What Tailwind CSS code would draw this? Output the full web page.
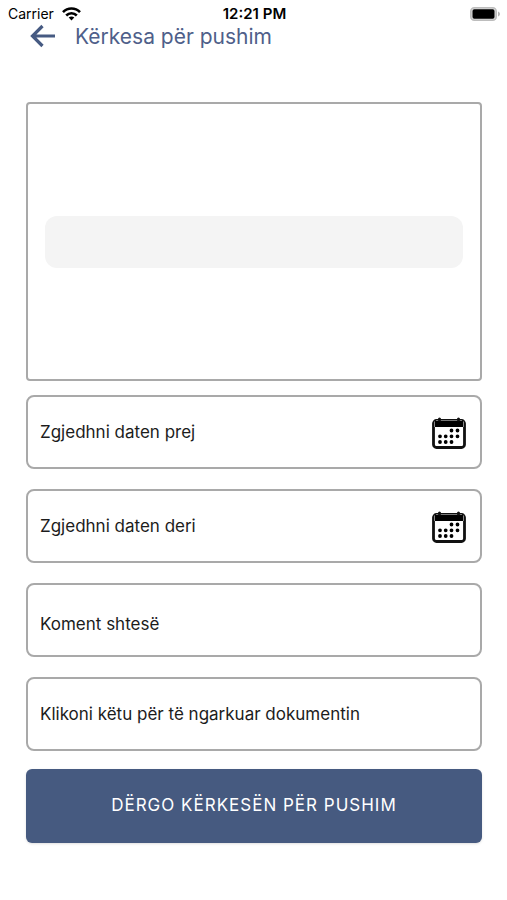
<!DOCTYPE html>
<html lang="sq">
<head>
<meta charset="utf-8">
<meta name="viewport" content="width=device-width, initial-scale=1">
<title>Kërkesa për pushim</title>
<script src="https://cdn.jsdelivr.net/npm/@tailwindcss/browser@4"></script>
</head>
<body class="min-h-screen bg-white font-['Inter','Liberation_Sans',sans-serif] text-[17px] text-[#1c1c1c]">
<div class="grid h-6 grid-cols-3 items-center pt-1 pl-2 pr-1.5 text-[14px] leading-5 text-black">
  <div class="flex items-center gap-2">
    <span>Carrier</span>
    <svg class="h-3.5 w-[19px]" viewBox="0 0 19 14" fill="none" stroke="#000" stroke-width="2.6" aria-hidden="true">
      <path d="M1 5.2C5.7.3 13.3.3 18 5.2"/>
      <path d="M4.2 8.5c3-3.1 7.600-3.100 10.600 0"/>
      <path d="M9.500 13.500 6.700 10.600c1.600-1.500 4-1.500 5.600 0z" fill="#000" stroke="none"/>
    </svg>
  </div>
  <div class="text-center text-[15px] font-semibold">12:21 PM</div>
  <svg class="h-3.5 w-[31px] justify-self-end" viewBox="0 0 31 14" aria-hidden="true">
    <rect x=".8" y=".8" width="25.400" height="12.400" rx="3.500" fill="#ddd" stroke="#bdbdbd" stroke-width="1.600"/>
    <rect x="2.500" y="2.200" width="22" height="9.600" rx="1.800" fill="#000"/>
    <path d="M28 4.500c2.600.8 2.600 4.200 0 5z" fill="#b5b5b5"/>
  </svg>
</div>

<header class="flex h-6 items-center gap-5 pl-[30px] text-[#4f5f8a]">
  <button type="button" aria-label="Kthehu" class="block">
    <svg class="h-6 w-[25px]" viewBox="0 0 25 24" fill="none" stroke="#465a82" stroke-width="3.200" aria-hidden="true">
      <path d="M25 12H2.500M12.500 2 2.500 12l10 10"/>
    </svg>
  </button>
  <h1 class="pt-0.5 text-[21px] leading-6">Kërkesa për pushim</h1>
</header>

<form class="pt-[54px] pr-[25px] pl-[26px]">
  <div class="flex h-[279px] items-center rounded border-2 border-[#a9a9a9] px-[17px]" role="listbox" aria-label="Lloji i pushimit">
    <div class="h-[52px] w-full rounded-xl bg-[#f4f4f4]" role="option" aria-selected="true"></div>
  </div>

  <div class="mt-3.5 flex flex-col gap-5">
    <button type="button" class="flex h-[74px] w-full items-center justify-between rounded-lg border-2 border-[#a9a9a9] pt-0.5 pr-3.5 pl-3 text-left">
      <span>Zgjedhni daten prej</span>
      <svg class="h-8 w-[34px]" viewBox="0 0 34 32" aria-hidden="true">
        <rect x="1.500" y="3.500" width="31" height="27" rx="3" fill="#fff" stroke="#111" stroke-width="2.800"/>
        <path d="M3 4h28v6H3z" fill="#000"/>
        <path d="M2.500 10V4.500M31.500 10V4.500" stroke="#888" stroke-width="1"/>
        <path d="M4 3.500h26" stroke="#777" stroke-width="1"/>
        <path d="M7.500 3V2M26.500 3V2" stroke="#111" stroke-width="3" stroke-linecap="round"/>
        <path d="M19.500 13.500h0M25.500 13.500h0M8 19.300h0M13.700 19.300h0M19.500 19.300h0M25.500 19.300h0M8 25h0M13.700 25h0M19.500 25h0" stroke="#000" stroke-width="3.800" stroke-linecap="round"/>
      </svg>
    </button>
    <button type="button" class="flex h-[74px] w-full items-center justify-between rounded-lg border-2 border-[#a9a9a9] pt-0.5 pr-3.5 pl-3 text-left">
      <span>Zgjedhni daten deri</span>
      <svg class="h-8 w-[34px]" viewBox="0 0 34 32" aria-hidden="true">
        <rect x="1.500" y="3.500" width="31" height="27" rx="3" fill="#fff" stroke="#111" stroke-width="2.800"/>
        <path d="M3 4h28v6H3z" fill="#000"/>
        <path d="M2.500 10V4.500M31.500 10V4.500" stroke="#888" stroke-width="1"/>
        <path d="M4 3.500h26" stroke="#777" stroke-width="1"/>
        <path d="M7.500 3V2M26.500 3V2" stroke="#111" stroke-width="3" stroke-linecap="round"/>
        <path d="M19.500 13.500h0M25.500 13.500h0M8 19.300h0M13.700 19.300h0M19.500 19.300h0M25.500 19.300h0M8 25h0M13.700 25h0M19.500 25h0" stroke="#000" stroke-width="3.800" stroke-linecap="round"/>
      </svg>
    </button>
    <input type="text" aria-label="Koment shtesë" placeholder="Koment shtesë" class="h-[74px] w-full rounded-lg border-2 border-[#a9a9a9] px-3 pt-2 placeholder:text-[#1c1c1c] placeholder:opacity-100">
    <button type="button" class="h-[74px] w-full rounded-lg border-2 border-[#a9a9a9] px-3 pt-0.5 text-left">Klikoni këtu për të ngarkuar dokumentin</button>
  </div>

  <button type="submit" class="mt-[18px] h-[74px] w-full rounded-md bg-[#465a80] tracking-[1px] text-white shadow-sm">DËRGO KËRKESËN PËR PUSHIM</button>
</form>
</body>
</html>
